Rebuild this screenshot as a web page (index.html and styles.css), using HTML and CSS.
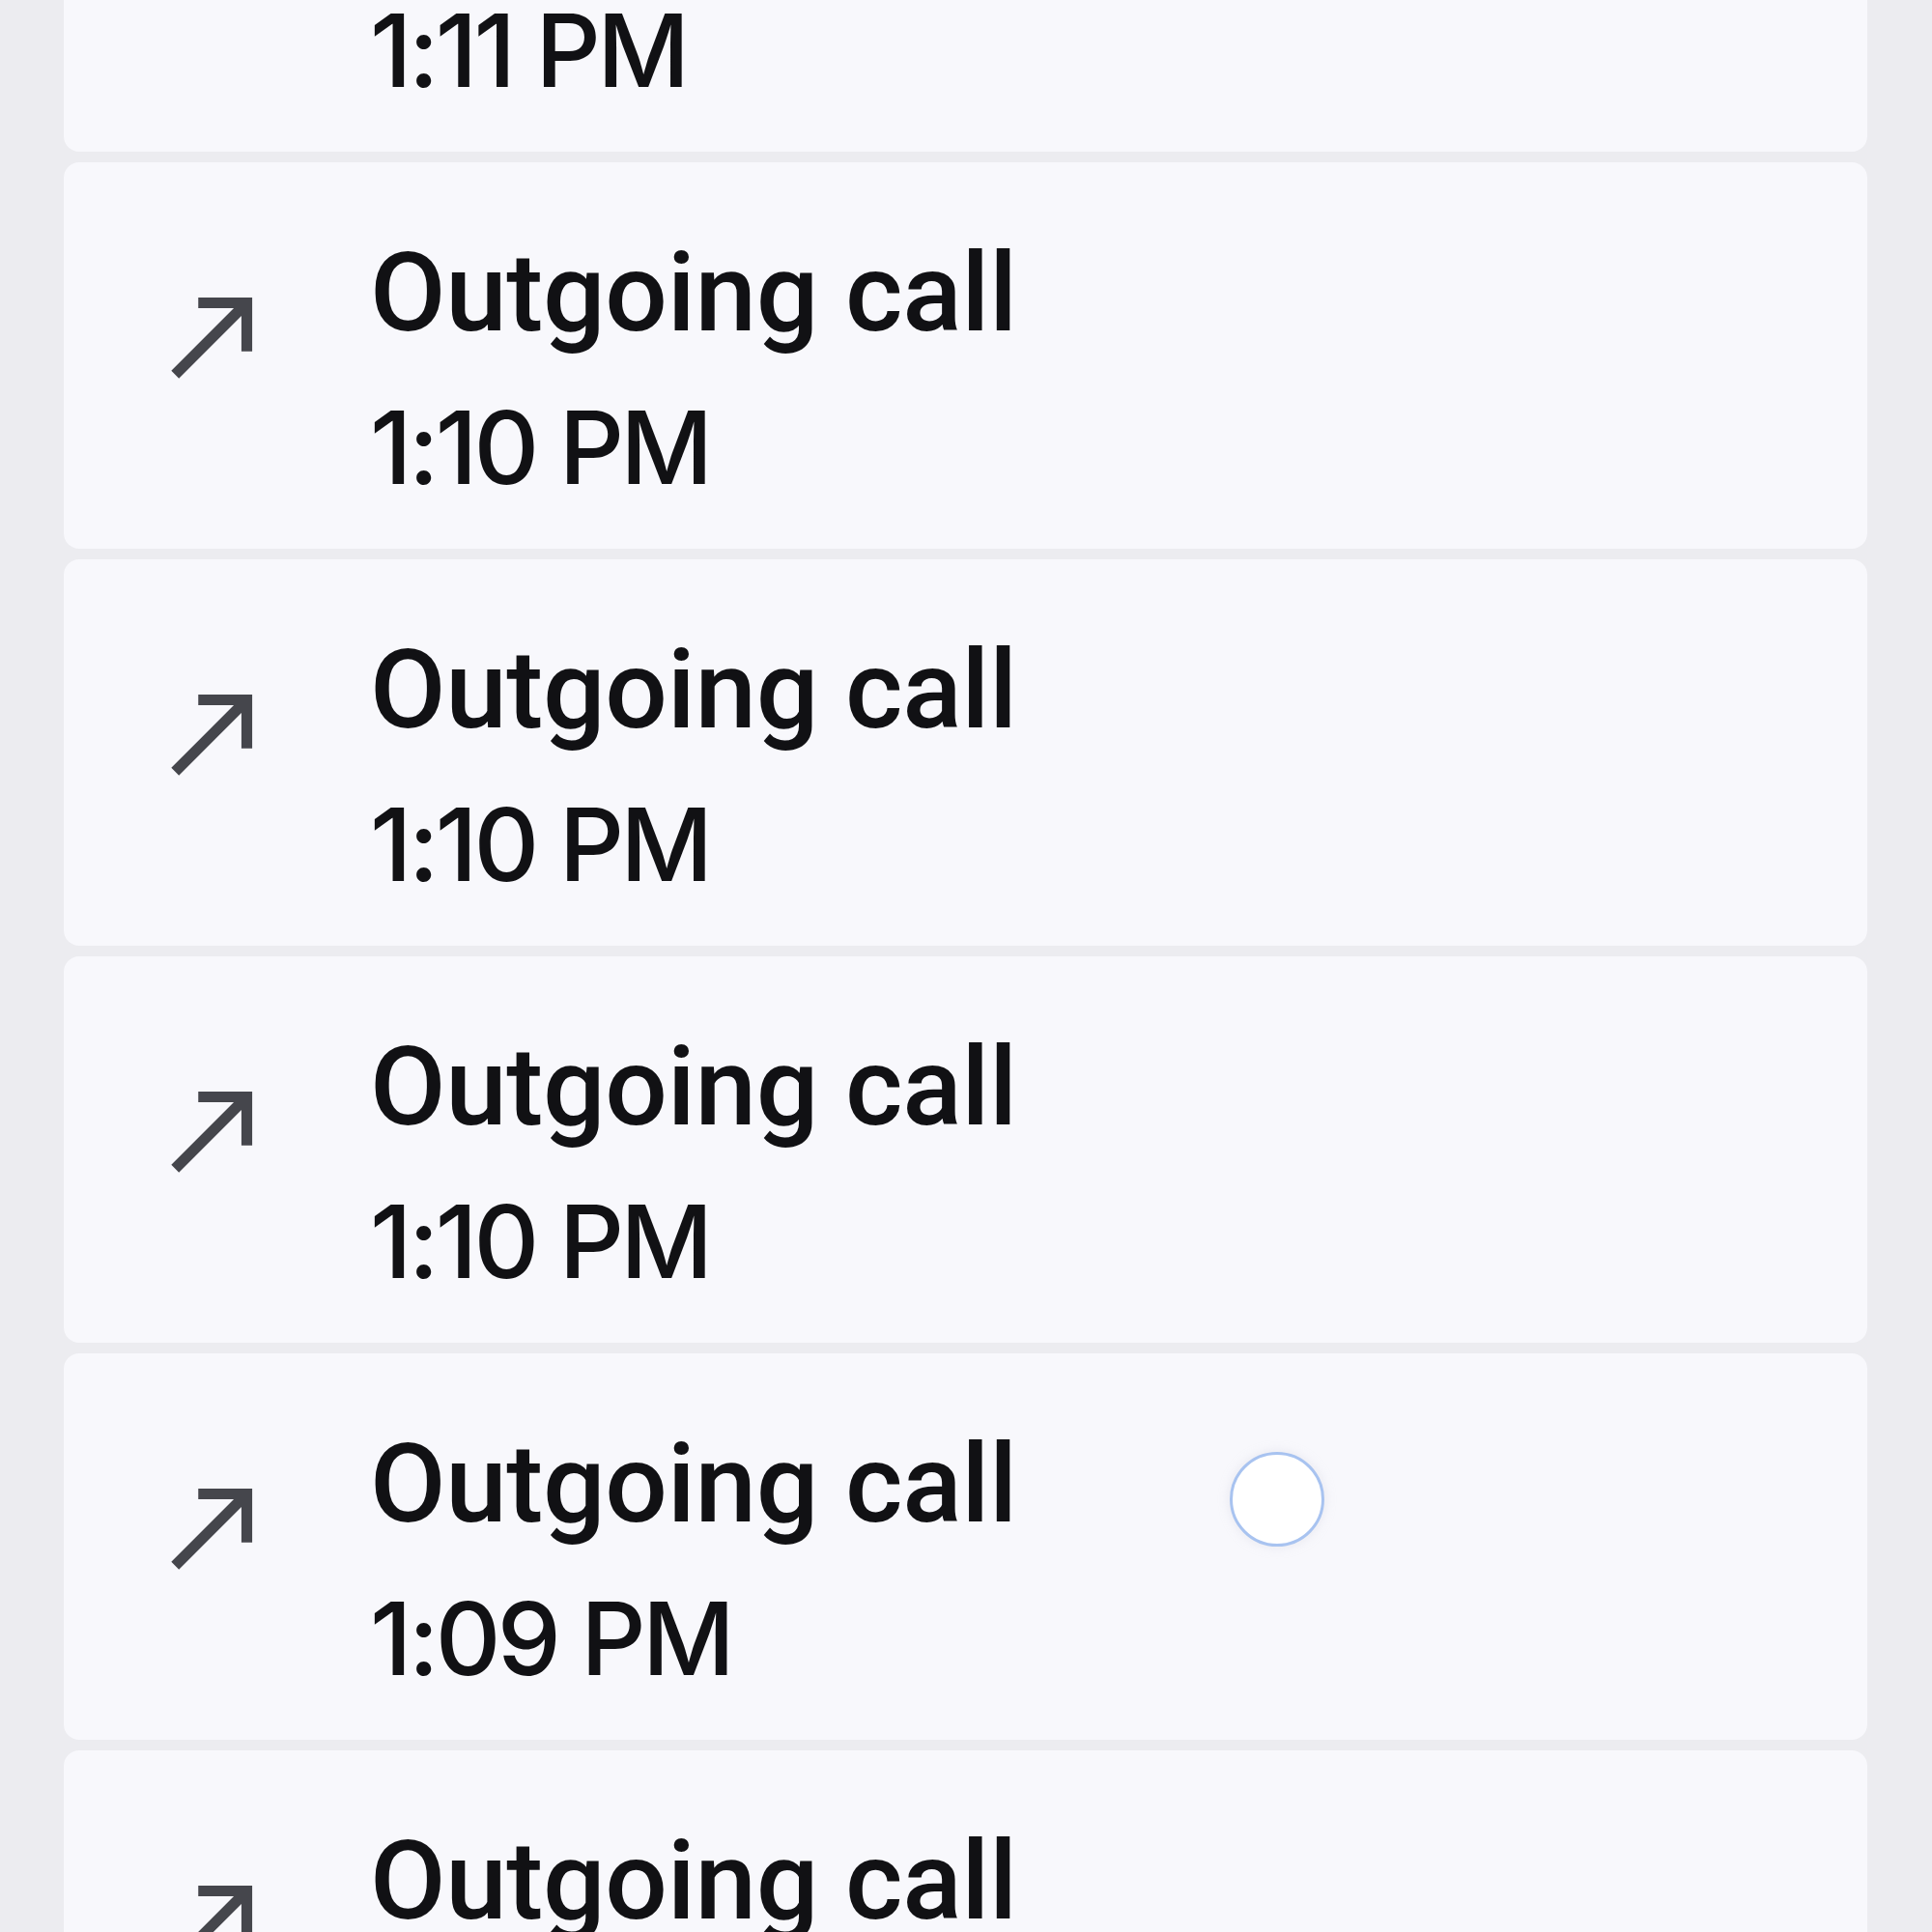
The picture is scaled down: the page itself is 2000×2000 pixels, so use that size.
FILE: index.html
```html
<!DOCTYPE html>
<html lang="en">
<head>
<meta charset="utf-8">
<title>Call log</title>
<link rel="stylesheet" href="styles.css">
</head>
<body>
<div class="list">
  <div class="card">
    <svg class="icon" viewBox="0 0 24 24"><path d="M9 5v2h6.59L4 18.59 5.41 20 17 8.41V15h2V5z"/></svg>
    <div class="text"><div class="title">Outgoing call</div><div class="time">1:11 PM</div></div>
  </div>
  <div class="card">
    <svg class="icon" viewBox="0 0 24 24"><path d="M9 5v2h6.59L4 18.59 5.41 20 17 8.41V15h2V5z"/></svg>
    <div class="text"><div class="title">Outgoing call</div><div class="time">1:10 PM</div></div>
  </div>
  <div class="card">
    <svg class="icon" viewBox="0 0 24 24"><path d="M9 5v2h6.59L4 18.59 5.41 20 17 8.41V15h2V5z"/></svg>
    <div class="text"><div class="title">Outgoing call</div><div class="time">1:10 PM</div></div>
  </div>
  <div class="card">
    <svg class="icon" viewBox="0 0 24 24"><path d="M9 5v2h6.59L4 18.59 5.41 20 17 8.41V15h2V5z"/></svg>
    <div class="text"><div class="title">Outgoing call</div><div class="time">1:10 PM</div></div>
  </div>
  <div class="card">
    <svg class="icon" viewBox="0 0 24 24"><path d="M9 5v2h6.59L4 18.59 5.41 20 17 8.41V15h2V5z"/></svg>
    <div class="text"><div class="title">Outgoing call</div><div class="time">1:09 PM</div></div>
    <span class="touch"></span>
  </div>
  <div class="card">
    <svg class="icon" viewBox="0 0 24 24"><path d="M9 5v2h6.59L4 18.59 5.41 20 17 8.41V15h2V5z"/></svg>
    <div class="text"><div class="title">Outgoing call</div><div class="time">1:09 PM</div></div>
  </div>
</div>
</body>
</html>
```
FILE: styles.css
```css
html, body {
  margin: 0;
  padding: 0;
}
body {
  background: #ececf0;
  width: 2000px;
  height: 2000px;
  overflow: hidden;
  font-family: Roboto, "Noto Sans", sans-serif;
  color: #111114;
}
.list {
  display: flex;
  flex-direction: column;
  gap: 11px;
  padding: 0 67px 0 66px;
  margin-top: -243px;
}
.card {
  position: relative;
  height: 400px;
  flex: none;
  background: #f8f8fc;
  border-radius: 16px;
  display: flex;
  align-items: flex-start;
}
.icon {
  width: 134px;
  height: 134px;
  margin-left: 89px;
  margin-top: 112px;
  fill: #45464c;
  flex: none;
}
.text {
  margin-left: 94px;
  padding-top: 55px;
  font-size: 114px;
  line-height: 160px;
  font-weight: 500;
  white-space: nowrap;
}
.title {
  letter-spacing: -0.3px;
}
.time {
  font-family: Inter, Roboto, sans-serif;
  font-size: 105px;
  font-variant-numeric: proportional-nums;
  letter-spacing: -3.8px;
}
.touch {
  position: absolute;
  left: 1207px;
  top: 102px;
  width: 92px;
  height: 92px;
  border: 3px solid #a8c3f0;
  border-radius: 50%;
  background: #ffffff;
  box-shadow: 0 0 12px rgba(200, 200, 215, 0.35);
}
```
